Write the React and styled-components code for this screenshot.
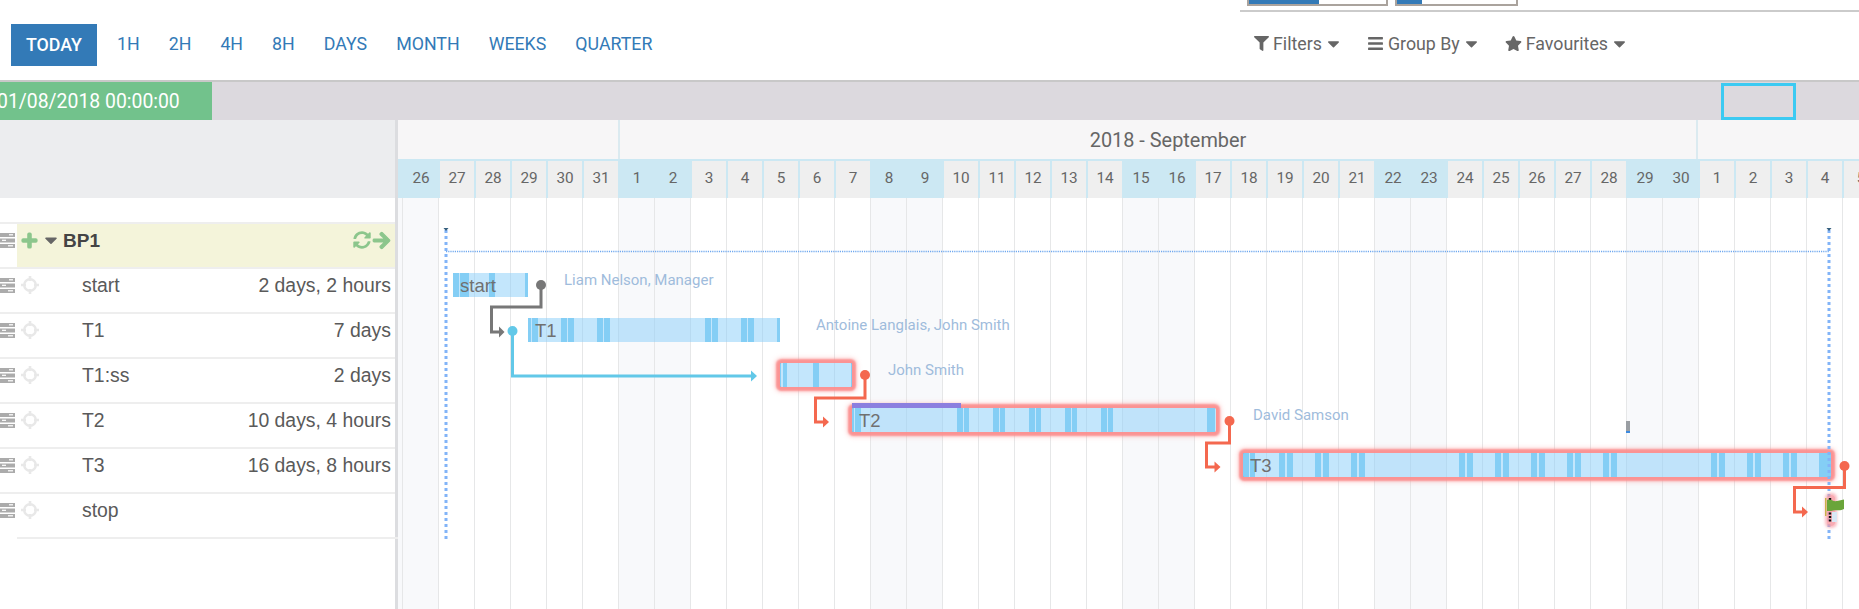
import React from "react";
import styled, { createGlobalStyle } from "styled-components";
import { FaFilter, FaBars, FaStar, FaCaretDown, FaPlus, FaSyncAlt, FaArrowRight } from "react-icons/fa";

const ORIGIN_X = 398;
const ORIGIN_Y = 198;

const Global = createGlobalStyle`
  html, body { margin: 0; padding: 0; background: #fff; overflow: hidden; }
  * { box-sizing: border-box; }
`;

const Page = styled.div`
  width: 1859px;
  height: 609px;
  display: flex;
  flex-direction: column;
  overflow: hidden;
  font-family: Roboto, "Liberation Sans", sans-serif;
`;

const ViewStrip = styled.div`
  height: 12px;
  margin-left: 1240px;
  padding-left: 7px;
  border-bottom: 2px solid #cbcbcb;
  display: flex;
  gap: 7px;
`;

const ViewBox = styled.div`
  width: ${(p) => p.$w}px;
  height: 6px;
  border: 2px solid #aaa39d;
  border-top: 0;
  background: linear-gradient(to right, #337ab7 ${(p) => p.$fill}px, #fff ${(p) => p.$fill}px);
`;

const Toolbar = styled.div`
  height: 70px;
  padding: 12px 0 0 11px;
  border-bottom: 2px solid #c8c8c8;
  display: flex;
  justify-content: space-between;
  font-size: 17.8px;
`;

const Scales = styled.div`
  display: flex;
  align-items: flex-start;
  gap: 29px;
`;

const TodayButton = styled.div`
  width: 86px;
  height: 42px;
  margin-right: -9px;
  padding-bottom: 2px;
  background: #337ab7;
  color: #fff;
  font-weight: 500;
  display: flex;
  align-items: center;
  justify-content: center;
`;

const ScaleLink = styled.div`
  height: 42px;
  line-height: 40px;
  color: #337ab7;
`;

const SearchMenus = styled.div`
  display: flex;
  gap: 27px;
  padding: 0 233px 3px 0;
  height: 42px;
  align-items: center;
  color: #666;
`;

const MenuItem = styled.div`
  display: flex;
  align-items: center;
  gap: 4px;
  svg { flex: none; }
`;

const MenuCaret = styled(FaCaretDown)`
  margin: 0 -3px 0 -2px;
`;

const Band = styled.div`
  height: 38px;
  background: #dcd9de;
  position: relative;
  flex: none;
`;

const RangeLabel = styled.div`
  width: 212px;
  height: 38px;
  background: #72c28c;
  color: #fff;
  font-size: 19.4px;
  line-height: 39px;
  text-indent: -3px;
  white-space: nowrap;
  overflow: hidden;
`;

const Viewport = styled.div`
  position: absolute;
  left: 1721px;
  top: 1px;
  width: 75px;
  height: 37px;
  border: 3px solid #3ccaf2;
`;

const Main = styled.div`
  flex: 1;
  display: flex;
  min-height: 0;
`;

const LeftPanel = styled.div`
  width: 398px;
  flex: none;
  border-right: 3px solid #dcdde0;
`;

const LeftHead = styled.div`
  height: 78px;
  background: #ecedef;
  margin-bottom: 24px;
`;

const Row = styled.div`
  height: 45px;
  display: flex;
  border-top: 2px solid #eee;
  font-family: "Liberation Sans", Arial, sans-serif;
  font-size: 19.4px;
  color: #5a5a5a;
`;

const EndRule = styled.div`
  height: 2px;
  margin: 0 -3px 0 17px;
  background: #eee;
`;

const Handle = styled.div`
  width: 17px;
  flex: none;
  height: 32px;
  display: flex;
  align-items: center;
`;

const RowBody = styled.div`
  flex: 1;
  padding: 0 4px 0 4px;
  height: 100%;
  display: flex;
  align-items: flex-start;
  line-height: 33px;
  background: ${(p) => (p.$group ? "#f4f4da" : "transparent")};
`;

const IconSlot = styled.div`
  height: 32px;
  display: flex;
  align-items: center;
  flex: none;
  margin-left: ${(p) => p.$gap || 0}px;
`;

const BoldIconSlot = styled(IconSlot)`
  svg { stroke: #8cc68c; stroke-width: ${(p) => p.$weight}; }
`;

const TaskName = styled.div`
  margin-left: 43px;
  flex: 1;
`;

const GroupName = styled.div`
  margin-left: 2px;
  flex: 1;
  font-size: 19px;
  font-weight: 700;
  color: #444;
`;

const Duration = styled.div`
  text-align: right;
`;

const Timeline = styled.div`
  flex: 1;
  display: flex;
  flex-direction: column;
  min-width: 0;
`;

const MonthRow = styled.div`
  height: 39px;
  display: flex;
  background: #f7f6f7;
  color: #666;
  font-size: 19.9px;
`;

const Month = styled.div`
  flex: none;
  width: ${(p) => p.$w}px;
  border-right: 2px solid #dbeaf0;
  line-height: 42px;
  text-align: center;
  padding-left: ${(p) => p.$pad || 0}px;
  &:last-child { border-right: 0; }
`;

const DayRow = styled.div`
  height: 39px;
  display: flex;
  background: #cce8f3;
  padding-top: 2px;
  font-size: 15.3px;
  color: #666;
`;

const DayCell = styled.div`
  flex: none;
  width: ${(p) => (p.$stub ? 4 : 36)}px;
  border-left: ${(p) => (p.$stub ? 0 : "2px solid #cce8f3")};
  background: ${(p) => (p.$weekend ? "#cce8f3" : "#efefef")};
  text-align: center;
  line-height: 35px;
`;

const Canvas = styled.div`
  flex: 1;
  position: relative;
  overflow: hidden;
`;

const Columns = styled.div`
  display: flex;
  height: 100%;
`;

const Column = styled.div`
  flex: none;
  width: ${(p) => (p.$stub ? 4 : 36)}px;
  border-left: ${(p) => (p.$stub ? 0 : "1px solid #e6e7e8")};
  background: ${(p) => (p.$weekend ? "#f8f9fb" : "#fff")};
`;

const Bar = styled.div.attrs((p) => ({
  style: { left: p.$x1 - ORIGIN_X, top: p.$y - ORIGIN_Y, width: p.$x2 - p.$x1 },
}))`
  position: absolute;
  height: 24px;
  background: rgba(135, 206, 250, 0.5);
  border-radius: ${(p) => (p.$critical ? 2 : 0)}px;
  box-shadow: ${(p) =>
    p.$critical
      ? "0 0 2px 4px rgba(251, 140, 140, 0.9), 0 0 5px 5px rgba(251, 150, 150, 0.4)"
      : "none"};
`;

const Stripe = styled.i.attrs((p) => ({
  style: { left: p.$from, width: p.$to - p.$from },
}))`
  position: absolute;
  top: 0;
  bottom: 0;
  background: rgba(90, 190, 240, 0.6);
`;

const BarText = styled.span`
  position: absolute;
  left: 7px;
  top: 1px;
  line-height: 24px;
  font-family: "Liberation Sans", Arial, sans-serif;
  font-size: 18.5px;
  color: #707070;
`;

const Progress = styled.div`
  position: absolute;
  left: 0;
  top: -5px;
  width: 109px;
  height: 5px;
  background: #8c7fdf;
`;

const Resource = styled.div.attrs((p) => ({
  style: { left: p.$x - ORIGIN_X, top: p.$y - ORIGIN_Y },
}))`
  position: absolute;
  height: 20px;
  line-height: 20px;
  white-space: nowrap;
  font-size: 15px;
  color: #9fbcdc;
`;

const Links = styled.svg`
  position: absolute;
  inset: 0;
  width: 100%;
  height: 100%;
`;

const MarkerTick = styled.div`
  position: absolute;
  left: ${1626 - ORIGIN_X}px;
  top: ${421 - ORIGIN_Y}px;
  width: 4px;
  height: 12px;
  background: #9a9ea3;
  border-bottom: 2px solid #3c8ae0;
`;

const Milestone = styled.div`
  position: absolute;
  left: ${1827 - ORIGIN_X}px;
  top: ${495 - ORIGIN_Y}px;
  width: 8px;
  height: 31px;
  border-radius: 3px;
  background: rgba(248, 150, 160, 0.8);
  box-shadow: 0 0 3px 2px rgba(248, 150, 160, 0.65);
`;

const FlagIcon = styled.svg`
  position: absolute;
  left: -2px;
  top: 1px;
  overflow: visible;
`;

const days = [];
const pushDays = (from, to, month) => {
  for (let d = from; d <= to; d++) {
    const dow = new Date(2018, month, d).getDay();
    days.push({ key: `${month}-${d}`, d, weekend: dow === 0 || dow === 6 });
  }
};
pushDays(26, 31, 7);
pushDays(1, 30, 8);
pushDays(1, 5, 9);

const ListIcon = () => (
  <svg width="15" height="15" viewBox="0 0 15 15">
    <rect x="0" y="0" width="15" height="4" fill="#ababab" />
    <rect x="0" y="5.5" width="15" height="4" fill="#ababab" />
    <rect x="0" y="11" width="15" height="4" fill="#ababab" />
    <rect x="9" y="1.2" width="4" height="1.2" fill="#fff" />
    <rect x="2" y="6.7" width="4" height="1.2" fill="#fff" />
    <rect x="8" y="12.2" width="5" height="1.2" fill="#fff" />
  </svg>
);

const MoveIcon = () => (
  <svg width="18" height="18" viewBox="0 0 18 18" fill="none" stroke="#e8e8e8">
    <circle cx="9" cy="9" r="5.8" strokeWidth="2.4" />
    <path d="M9 0V5M9 13V18M0 9H5M13 9H18" strokeWidth="2.6" />
  </svg>
);

const tasks = [
  { name: "start", duration: "2 days, 2 hours" },
  { name: "T1", duration: "7 days" },
  { name: "T1:ss", duration: "2 days" },
  { name: "T2", duration: "10 days, 4 hours" },
  { name: "T3", duration: "16 days, 8 hours" },
  { name: "stop", duration: "" },
];

const bars = [
  {
    x1: 453, x2: 528, y: 273, label: "start",
    stripes: [[453, 459], [460, 469], [489, 495], [525, 528]],
  },
  {
    x1: 528, x2: 780, y: 318, label: "T1",
    stripes: [[528, 531], [532, 538], [561, 567], [568, 574], [597, 603], [604, 610], [705, 711], [712, 718], [741, 747], [748, 754], [777, 780]],
  },
  {
    x1: 780, x2: 852, y: 363, critical: true,
    stripes: [[780, 781], [783, 787], [813, 819], [851, 852]],
  },
  {
    x1: 852, x2: 1216, y: 408, label: "T2", critical: true, progress: true,
    stripes: [[852, 854], [855, 861], [957, 963], [964, 969], [993, 999], [1000, 1005], [1029, 1035], [1036, 1041], [1065, 1071], [1072, 1077], [1101, 1107], [1108, 1113], [1207, 1215]],
  },
  {
    x1: 1243, x2: 1831, y: 453, label: "T3", critical: true,
    stripes: [[1243, 1249], [1250, 1255], [1279, 1285], [1287, 1293], [1315, 1321], [1323, 1329], [1351, 1357], [1359, 1365], [1459, 1465], [1467, 1473], [1495, 1501], [1503, 1509], [1531, 1537], [1539, 1545], [1567, 1573], [1575, 1581], [1603, 1609], [1611, 1617], [1711, 1717], [1719, 1725], [1747, 1753], [1755, 1761], [1783, 1789], [1791, 1797], [1819, 1825], [1825, 1831]],
  },
];

const resources = [
  { x: 564, y: 270, text: "Liam Nelson, Manager" },
  { x: 816, y: 315, text: "Antoine Langlais, John Smith" },
  { x: 888, y: 360, text: "John Smith" },
  { x: 1253, y: 405, text: "David Samson" },
];

const links = [
  { color: "#777", d: "M541 285V307H491.5V332H500", dot: [541, 285], head: "499,326.5 504.5,332 499,337.5" },
  { color: "#62c8e8", d: "M512.5 331V376H752", dot: [512.5, 331], head: "751,370.5 757,376 751,381.5" },
  { color: "#f4684f", d: "M865 375V398H815.5V422H824", dot: [865, 375], head: "823,416.5 829,422 823,427.5" },
  { color: "#f4684f", d: "M1229.5 421V443H1206.5V467H1215", dot: [1229.5, 421], head: "1214.5,461.5 1220.5,467 1214.5,472.5" },
  { color: "#f4684f", d: "M1844.5 466V487.5H1794.5V512H1803", dot: [1844.5, 466], head: "1802,506.5 1808,512 1802,517.5" },
];

export default function App() {
  return (
    <Page>
      <Global />
      <ViewStrip>
        <ViewBox $w={141} $fill={70} />
        <ViewBox $w={123} $fill={25} />
      </ViewStrip>
      <Toolbar>
        <Scales>
          <TodayButton>TODAY</TodayButton>
          {["1H", "2H", "4H", "8H", "DAYS", "MONTH", "WEEKS", "QUARTER"].map((s) => (
            <ScaleLink key={s}>{s}</ScaleLink>
          ))}
        </Scales>
        <SearchMenus>
          <MenuItem>
            <FaFilter size={15} />
            Filters
            <MenuCaret size={19} />
          </MenuItem>
          <MenuItem>
            <FaBars size={17} />
            Group By
            <MenuCaret size={19} />
          </MenuItem>
          <MenuItem>
            <FaStar size={17} />
            Favourites
            <MenuCaret size={19} />
          </MenuItem>
        </SearchMenus>
      </Toolbar>
      <Band>
        <RangeLabel>01/08/2018 00:00:00</RangeLabel>
        <Viewport />
      </Band>
      <Main>
        <LeftPanel>
          <LeftHead />
          <Row>
            <Handle><ListIcon /></Handle>
            <RowBody $group>
              <BoldIconSlot $weight={40}><FaPlus size={17} color="#8cc68c" /></BoldIconSlot>
              <IconSlot $gap={3}><FaCaretDown size={20} color="#666" /></IconSlot>
              <GroupName>BP1</GroupName>
              <IconSlot><FaSyncAlt size={18} color="#8cc68c" /></IconSlot>
              <BoldIconSlot $gap={1} $weight={32}><FaArrowRight size={19} color="#8cc68c" /></BoldIconSlot>
            </RowBody>
          </Row>
          {tasks.map((t) => (
            <Row key={t.name}>
              <Handle><ListIcon /></Handle>
              <RowBody>
                <IconSlot><MoveIcon /></IconSlot>
                <TaskName>{t.name}</TaskName>
                <Duration>{t.duration}</Duration>
              </RowBody>
            </Row>
          ))}
          <EndRule />
        </LeftPanel>
        <Timeline>
          <MonthRow>
            <Month $w={222} />
            <Month $w={1078} $pad={20}>2018 - September</Month>
            <Month $w={161} />
          </MonthRow>
          <DayRow>
            <DayCell $stub $weekend />
            {days.map((d) => (
              <DayCell key={d.key} $weekend={d.weekend}>{d.d}</DayCell>
            ))}
          </DayRow>
          <Canvas>
            <Columns>
              <Column $stub $weekend />
              {days.map((d) => (
                <Column key={d.key} $weekend={d.weekend} />
              ))}
            </Columns>
            {bars.map((b) => (
              <Bar key={b.x1} $x1={b.x1} $x2={b.x2} $y={b.y} $critical={b.critical}>
                {b.progress && <Progress />}
                {b.stripes.map(([a, z]) => (
                  <Stripe key={a} $from={a - b.x1} $to={z - b.x1} />
                ))}
                {b.label && <BarText>{b.label}</BarText>}
              </Bar>
            ))}
            {resources.map((r) => (
              <Resource key={r.text} $x={r.x} $y={r.y}>{r.text}</Resource>
            ))}
            <MarkerTick />
            <Links viewBox={`${ORIGIN_X} ${ORIGIN_Y} 1461 411`}>
              <path d="M446 230V542M1829 230V542" stroke="#82b4f8" strokeWidth="3" strokeDasharray="3 3" fill="none" />
              <path d="M446 251.5H1829" stroke="#6fa8ee" strokeWidth="1.6" strokeDasharray="1.2 1" fill="none" />
              <path d="M443.5 228H448.5L446 231ZM1826.5 228H1831.5L1829 231Z" fill="#35607f" />
              {links.map((l) => (
                <g key={l.d}>
                  <path d={l.d} stroke={l.color} strokeWidth="3" fill="none" />
                  <circle cx={l.dot[0]} cy={l.dot[1]} r="5" fill={l.color} />
                  <polygon points={l.head} fill={l.color} />
                </g>
              ))}
            </Links>
            <Milestone>
              <FlagIcon width="20" height="29" viewBox="0 0 20 29">
                <rect x="0" y="2" width="1.5" height="18" fill="#c9b24a" />
                <rect x="7" y="16" width="5" height="10" fill="#d9e8f5" />
                <line x1="5" y1="2" x2="5" y2="27" stroke="#111" strokeWidth="2.4" strokeDasharray="2 1.6" />
                <path d="M2 4 C5 2 8 6 12 5 L19 3.5 L19 13 C15 15.5 10 13 6 15 L2 15 Z" fill="#6aa53a" />
              </FlagIcon>
            </Milestone>
          </Canvas>
        </Timeline>
      </Main>
    </Page>
  );
}
